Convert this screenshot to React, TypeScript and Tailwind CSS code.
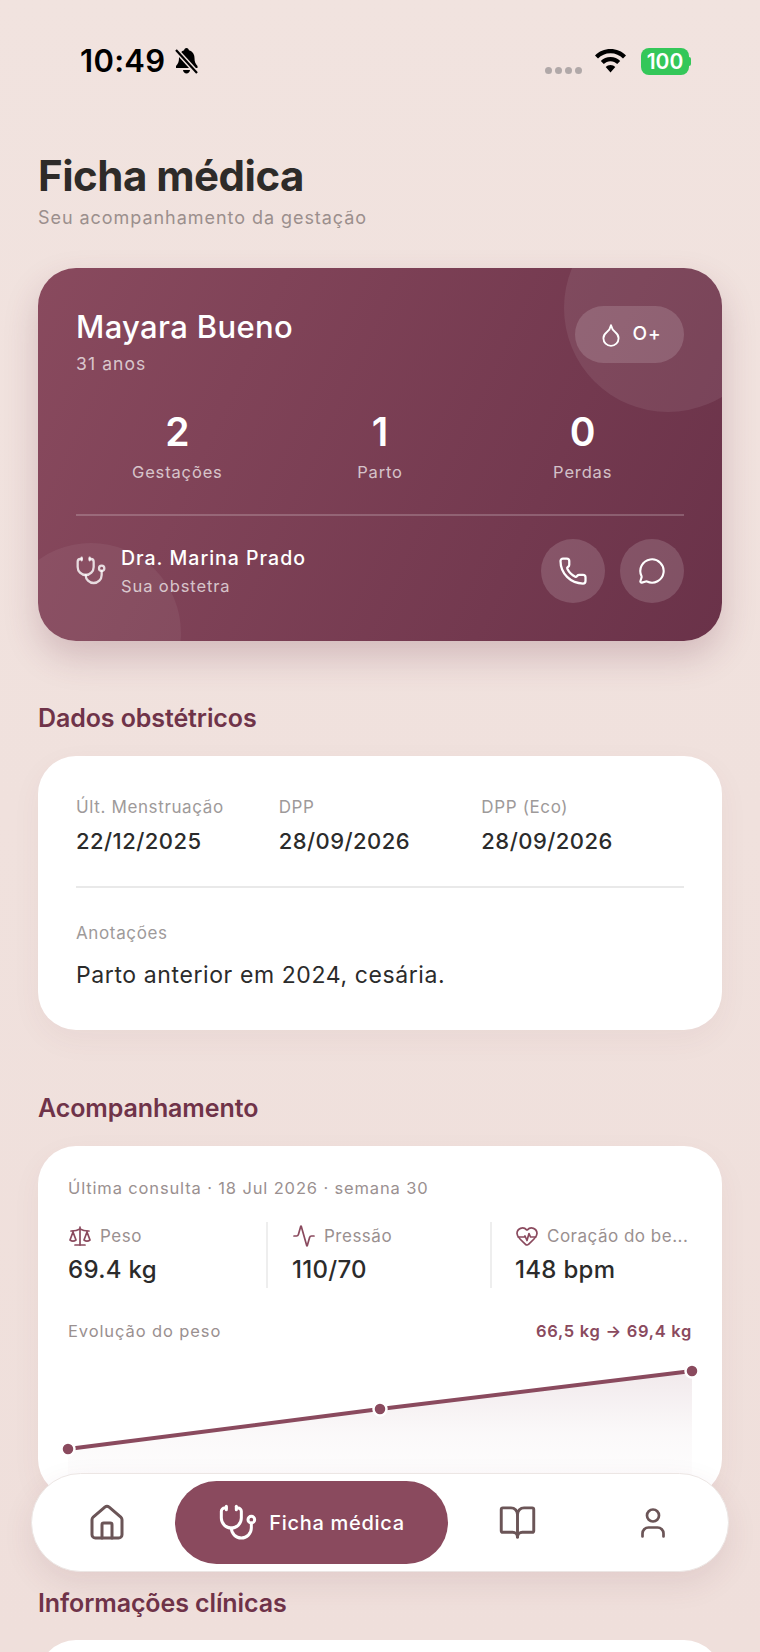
import { FC, ReactNode } from "react";
import { Activity, BookOpen, Droplet, HeartPulse, House, MessageCircle, Phone, Scale, Stethoscope, User } from "lucide-react";

const inter = "font-['Inter',sans-serif]";

// Status bar pieces
const BellSlash: FC = () => (
	<svg width="27" height="28" viewBox="0 0 27 28" fill="#000">
		<path d="M13.5 1c1.4 0 2.3 1 2.4 2.3 3.6 1 5.6 4 5.6 7.7 0 3.500.8 5.600 3 8v2H3v-2c2.200-2.400 3-4.500 3-8 0-3.700 2-6.700 5.100-7.700C11.200 2 12.100 1 13.500 1z" />
		<path d="M10 23h7c-.3 2-1.700 3.500-3.500 3.500S10.300 25 10 23z" />
		<path d="M3 3l21 23" stroke="#f1e3df" strokeWidth="5" />
		<path d="M3 3l21 23" stroke="#000" strokeWidth="2.200" />
	</svg>
);

const Wifi: FC = () => (
	<svg width="33" height="24" viewBox="0 0 32 24" fill="#000">
		<path d="M16 0C10 0 4.500 2.400.5 6.400l3 3.100C6.700 6.300 11.100 4.300 16 4.300s9.300 2 12.500 5.200l3-3.100C27.500 2.400 22 0 16 0z" />
		<path d="M16 8c-3.800 0-7.200 1.500-9.700 4l3 3.100c1.700-1.700 4.100-2.800 6.700-2.800s5 1.100 6.700 2.800l3-3.100C23.200 9.500 19.800 8 16 8z" />
		<path d="M16 16c-1.900 0-3.600.8-4.800 2l4.800 5.500 4.800-5.500c-1.200-1.200-2.900-2-4.800-2z" />
	</svg>
);

const StatusBar: FC = () => (
	<div className="h-[151px] relative">
		<div className="absolute left-[80px] top-[44px] flex items-center gap-[8px]">
			<span className={`${inter} text-[31px] leading-[34px] font-semibold text-black tracking-[0.3px]`}>10:49</span>
			<BellSlash />
		</div>
		<div className="absolute left-[545px] top-[48px] flex items-start">
			<div className="flex gap-[3px] mt-[19px]">
				<span className="w-[7px] h-[7px] rounded-full bg-[#b0a8a8]" />
				<span className="w-[7px] h-[7px] rounded-full bg-[#b0a8a8]" />
				<span className="w-[7px] h-[7px] rounded-full bg-[#b0a8a8]" />
				<span className="w-[7px] h-[7px] rounded-full bg-[#b0a8a8]" />
			</div>
			<div className="ml-[12px] mt-[1px]"><Wifi /></div>
			<div className="ml-[14px] flex items-center">
				<div className={`${inter} w-[48px] h-[27px] rounded-[8px] bg-[#34c759] text-white text-[21px] leading-[27px] font-semibold text-center`}>100</div>
				<span className="w-[2px] h-[9px] rounded-r-full bg-[#34c759]" />
			</div>
		</div>
	</div>
);

const SectionTitle: FC<{ children: ReactNode; className: string }> = ({ children, className }) => (
	<h2 className={`${inter} ${className} text-[25px] leading-[32px] font-semibold text-[#6f3349] tracking-[-0.1px]`}>{children}</h2>
);

const HeroStat: FC<{ value: string; label: string }> = ({ value, label }) => (
	<div className="flex-1 flex flex-col items-center">
		<div className={`${inter} text-[39px] leading-[44px] font-semibold text-white`}>{value}</div>
		<div className={`${inter} mt-[6px] text-[16.5px] leading-[24px] tracking-[0.85px] text-white/70`}>{label}</div>
	</div>
);

const HeroCard: FC = () => (
	<div className="relative mt-[38px] h-[373px] rounded-[38px] bg-[linear-gradient(115deg,#894a5e,#6a3249)] shadow-[0_16px_34px_rgba(111,51,73,0.22)]">
		<div className="absolute inset-0 rounded-[38px] overflow-hidden">
			<div className="absolute top-[-64px] right-[-50px] w-[208px] h-[208px] rounded-full bg-white/[0.08]" />
			<div className="absolute bottom-[-82px] left-[-37px] w-[180px] h-[180px] rounded-full bg-white/[0.06]" />
		</div>
		<div className={`${inter} relative px-[38px] pt-[38px]`}>
			<div className="flex justify-between items-start">
				<div className="pt-[1px]">
					<div className="text-[31px] leading-[40px] font-medium text-white tracking-[0.35px]">Mayara Bueno</div>
					<div className="mt-[5px] text-[17.5px] leading-[24px] tracking-[1.1px] text-white/70">31 anos</div>
				</div>
				<div className="w-[109px] h-[57px] rounded-full bg-white/15 flex items-center justify-center gap-[9px]">
					<Droplet size={26} strokeWidth={1.7} className="text-white" />
					<span className="text-[19px] font-medium tracking-[0.8px] text-white">O+</span>
				</div>
			</div>
			<div className="mt-[34px] flex">
				<HeroStat value="2" label="Gestações" />
				<HeroStat value="1" label="Parto" />
				<HeroStat value="0" label="Perdas" />
			</div>
			<div className="mt-[30px] h-[2px] bg-white/20" />
			<div className="mt-[23px] flex items-center">
				<Stethoscope size={32} strokeWidth={1.7} className="text-white/80 -ml-[1px]" />
				<div className="ml-[14px]">
					<div className="text-[19.5px] leading-[28px] font-[550] text-white tracking-[1px]">Dra. Marina Prado</div>
					<div className="mt-[1px] text-[16.5px] leading-[26px] tracking-[0.9px] text-white/70">Sua obstetra</div>
				</div>
				<div className="ml-auto flex gap-[15px]">
					<div className="w-[64px] h-[64px] rounded-full bg-white/15 flex items-center justify-center">
						<Phone size={30} strokeWidth={1.8} className="text-white" />
					</div>
					<div className="w-[64px] h-[64px] rounded-full bg-white/15 flex items-center justify-center">
						<MessageCircle size={28} strokeWidth={1.8} className="text-white" />
					</div>
				</div>
			</div>
		</div>
	</div>
);

const DateField: FC<{ label: string; value: string }> = ({ label, value }) => (
	<div className="w-[203px]">
		<div className="text-[17px] leading-[24px] tracking-[0.63px] text-[#9e9a9a]">{label}</div>
		<div className="mt-[7px] text-[22px] leading-[30px] font-[550] text-[#2b2b2b] tracking-[0.45px]">{value}</div>
	</div>
);

const ObstetricCard: FC = () => (
	<div className={`${inter} mt-[22px] h-[274px] rounded-[38px] bg-white px-[38px] pt-[39px] shadow-[0_10px_30px_rgba(111,51,73,0.05)]`}>
		<div className="flex">
			<DateField label="Últ. Menstruação" value="22/12/2025" />
			<DateField label="DPP" value="28/09/2026" />
			<DateField label="DPP (Eco)" value="28/09/2026" />
		</div>
		<div className="mt-[30px] h-[2px] bg-[#e9e9e9]" />
		<div className="mt-[33px] text-[17px] leading-[24px] tracking-[0.63px] text-[#9e9a9a]">Anotações</div>
		<div className="mt-[14px] text-[23px] leading-[32px] text-[#2b2b2b] tracking-[0.6px]">Parto anterior em 2024, cesária.</div>
	</div>
);

const Metric: FC<{ icon: ReactNode; label: string; value: string; className: string }> = ({ icon, label, value, className }) => (
	<div className={className}>
		<div className="flex items-center gap-[8px] h-[24px] mt-[2px]">
			{icon}
			<span className="text-[17px] leading-[24px] tracking-[0.5px] text-[#9a9090] whitespace-nowrap">{label}</span>
		</div>
		<div className="mt-[7px] text-[24px] leading-[30px] font-[550] tracking-[0.3px] text-[#2b2b2b]">{value}</div>
	</div>
);

const WeightChart: FC = () => (
	<svg width="624" height="154" viewBox="0 0 624 154" className="overflow-visible">
		<defs>
			<linearGradient id="weightFill" x1="0" y1="0" x2="0" y2="1">
				<stop offset="0" stopColor="#8a4a5e" stopOpacity="0.12" />
				<stop offset="0.5" stopColor="#8a4a5e" stopOpacity="0.035" />
				<stop offset="1" stopColor="#8a4a5e" stopOpacity="0" />
			</linearGradient>
		</defs>
		<path d="M0 106L312 66L624 28V154H0Z" fill="url(#weightFill)" />
		<path d="M0 106L312 66L624 28" fill="none" stroke="#8a4a5e" strokeWidth="4" />
		<circle cx="0" cy="106" r="6.5" fill="#8a4a5e" stroke="#fff" strokeWidth="2.5" />
		<circle cx="312" cy="66" r="6.5" fill="#8a4a5e" stroke="#fff" strokeWidth="2.5" />
		<circle cx="624" cy="28" r="6.5" fill="#8a4a5e" stroke="#fff" strokeWidth="2.5" />
	</svg>
);

const FollowUpCard: FC = () => (
	<div className={`${inter} mt-[22px] h-[351px] rounded-[38px] bg-white pl-[30px] pr-[30px] pt-[30px] shadow-[0_10px_30px_rgba(111,51,73,0.05)]`}>
		<div className="text-[16.5px] leading-[24px] tracking-[0.86px] text-[#9a9090]">Última consulta · 18 Jul 2026 · semana 30</div>
		<div className="mt-[22px] flex h-[66px]">
			<Metric
				className="w-[200px] border-r-2 border-[#eeeeee]"
				icon={<Scale size={24} strokeWidth={1.7} className="text-[#8a4a5e]" />}
				label="Peso"
				value="69.4 kg"
			/>
			<Metric
				className="w-[224px] pl-[24px] border-r-2 border-[#eeeeee]"
				icon={<Activity size={24} strokeWidth={1.7} className="text-[#8a4a5e]" />}
				label="Pressão"
				value="110/70"
			/>
			<Metric
				className="pl-[23px]"
				icon={<HeartPulse size={24} strokeWidth={1.7} className="text-[#8a4a5e]" />}
				label="Coração do be..."
				value="148 bpm"
			/>
		</div>
		<div className="mt-[31px] flex justify-between">
			<span className="text-[16.5px] leading-[24px] tracking-[0.9px] text-[#9a9090]">Evolução do peso</span>
			<span className="text-[16.5px] leading-[24px] font-semibold tracking-[0.7px] text-[#8a4a5e]">66,5 kg → 69,4 kg</span>
		</div>
		<WeightChart />
	</div>
);

const BottomNav: FC = () => (
	<div className="absolute left-[31px] top-[1473px] w-[698px] h-[99px] rounded-full bg-white border border-[#ece6e4] shadow-[0_12px_30px_rgba(111,51,73,0.1)] flex items-center pl-[6px] text-[#6b5557]">
		<div className="w-[137px] flex justify-center"><House size={40} strokeWidth={1.8} /></div>
		<div className="w-[273px] h-[83px] rounded-full bg-[#8a4a5e] flex items-center justify-center gap-[11px] text-white">
			<Stethoscope size={40} strokeWidth={1.8} />
			<span className={`${inter} text-[20px] font-medium tracking-[0.7px]`}>Ficha médica</span>
		</div>
		<div className="w-[138px] flex justify-center"><BookOpen size={39} strokeWidth={1.8} /></div>
		<div className="w-[134px] flex justify-center"><User size={36} strokeWidth={1.8} /></div>
	</div>
);

export default function App() {
	return (
		<div className="relative h-[1652px] w-[760px] overflow-hidden bg-gradient-to-b from-[#f1e3df] to-[#efdfdb]">
			<StatusBar />
			<div className="px-[38px]">
				<h1 className={`${inter} text-[42px] leading-[50px] font-bold text-[#2e2b29] tracking-[-0.5px]`}>Ficha médica</h1>
				<p className={`${inter} mt-[5px] text-[18px] leading-[24px] tracking-[0.95px] text-[#9b8f8d]`}>Seu acompanhamento da gestação</p>
				<HeroCard />
				<SectionTitle className="mt-[61px]">Dados obstétricos</SectionTitle>
				<ObstetricCard />
				<SectionTitle className="mt-[62px]">Acompanhamento</SectionTitle>
				<FollowUpCard />
				<SectionTitle className="mt-[90px]">Informações clínicas</SectionTitle>
				<div className="mt-[21px] h-[120px] rounded-[38px] bg-white" />
			</div>
			<BottomNav />
		</div>
	);
}
